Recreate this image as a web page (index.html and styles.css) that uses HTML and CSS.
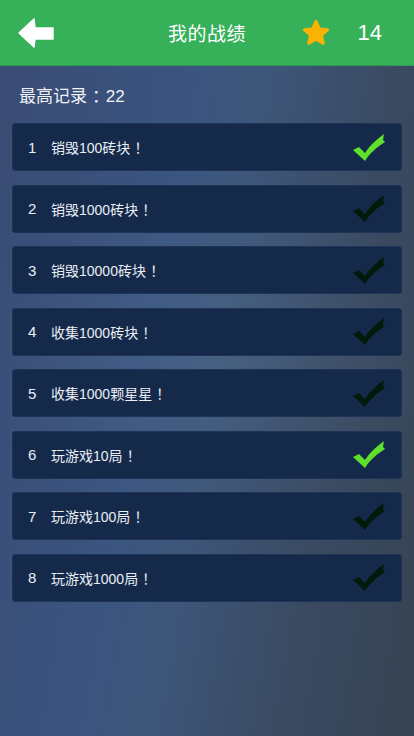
FILE: index.html
```html
<!DOCTYPE html>
<html lang="zh">
<head>
    <meta charset="UTF-8">
    <meta name="viewport" content="width=device-width, initial-scale=1.0">
    <title>我的战绩</title>
    <link rel="stylesheet" href="styles.css">
</head>
<body>
    <header class="top-bar">
        <div class="back">
            <svg width="36" height="30" viewBox="0 0 36 30">
                <path d="M1,15 L16,1 L17,10 L35,10 L35,21 L17,21 L16,29 Z" fill="#fff" stroke="#fff" stroke-width="1.5" stroke-linejoin="round"/>
            </svg>
        </div>
        <h1 class="title">我的战绩</h1>
        <div class="stars">
            <svg width="30" height="30" viewBox="0 0 24 24">
                <path d="M12,2.5 L14.8,8.6 L21.4,9.3 L16.5,13.8 L17.9,20.4 L12,17 L6.1,20.4 L7.5,13.8 L2.6,9.3 L9.2,8.6 Z" fill="#fbb202" stroke="#fbb202" stroke-width="2.2" stroke-linejoin="round"/>
            </svg>
            <span class="star-count">14</span>
        </div>
    </header>

    <p class="record">最高记录<span class="punct">：</span>22</p>

    <ul class="list">
        <li class="item"><span class="num">1</span><span class="label">销毁100砖块<span class="punct">！</span></span><svg class="check done" viewBox="0 0 33 27"><path d="M1,16 L7,13 L13,19 C18,11 25,5 32,0 L31,6 L33,8 C25,13 18,19 13,27 Z"/></svg></li>
        <li class="item"><span class="num">2</span><span class="label">销毁1000砖块<span class="punct">！</span></span><svg class="check" viewBox="0 0 33 27"><path d="M1,16 L7,13 L13,19 C18,11 25,5 32,0 L31,6 L33,8 C25,13 18,19 13,27 Z"/></svg></li>
        <li class="item"><span class="num">3</span><span class="label">销毁10000砖块<span class="punct">！</span></span><svg class="check" viewBox="0 0 33 27"><path d="M1,16 L7,13 L13,19 C18,11 25,5 32,0 L31,6 L33,8 C25,13 18,19 13,27 Z"/></svg></li>
        <li class="item"><span class="num">4</span><span class="label">收集1000砖块<span class="punct">！</span></span><svg class="check" viewBox="0 0 33 27"><path d="M1,16 L7,13 L13,19 C18,11 25,5 32,0 L31,6 L33,8 C25,13 18,19 13,27 Z"/></svg></li>
        <li class="item"><span class="num">5</span><span class="label">收集1000颗星星<span class="punct">！</span></span><svg class="check" viewBox="0 0 33 27"><path d="M1,16 L7,13 L13,19 C18,11 25,5 32,0 L31,6 L33,8 C25,13 18,19 13,27 Z"/></svg></li>
        <li class="item"><span class="num">6</span><span class="label">玩游戏10局<span class="punct">！</span></span><svg class="check done" viewBox="0 0 33 27"><path d="M1,16 L7,13 L13,19 C18,11 25,5 32,0 L31,6 L33,8 C25,13 18,19 13,27 Z"/></svg></li>
        <li class="item"><span class="num">7</span><span class="label">玩游戏100局<span class="punct">！</span></span><svg class="check" viewBox="0 0 33 27"><path d="M1,16 L7,13 L13,19 C18,11 25,5 32,0 L31,6 L33,8 C25,13 18,19 13,27 Z"/></svg></li>
        <li class="item"><span class="num">8</span><span class="label">玩游戏1000局<span class="punct">！</span></span><svg class="check" viewBox="0 0 33 27"><path d="M1,16 L7,13 L13,19 C18,11 25,5 32,0 L31,6 L33,8 C25,13 18,19 13,27 Z"/></svg></li>
    </ul>
</body>
</html>
```

FILE: styles.css
```css
/* Reset */
* {
    margin: 0;
    padding: 0;
    box-sizing: border-box;
}

body {
    font-family: 'Liberation Sans', 'Noto Sans CJK SC', sans-serif;
    min-height: 736px;
    color: #fff;
    background:
        radial-gradient(ellipse 55% 25% at 52% 48%, rgba(110, 140, 170, 0.2), rgba(110, 140, 170, 0) 100%),
        linear-gradient(100deg, #3a4b73 0%, #3a5580 38%, #3d5679 52%, #3a4a62 75%, #364352 100%);
}

.top-bar {
    height: 66px;
    background: #37b05a;
    border-bottom: 1px solid #2f9a4f;
    display: grid;
    grid-template-columns: 1fr auto 1fr;
    align-items: center;
    padding: 0 18px;
}

.back svg {
    display: block;
}

.title {
    font-size: 19px;
    font-weight: normal;
    letter-spacing: 0.5px;
}

.stars {
    display: flex;
    align-items: center;
    justify-content: flex-end;
    margin-right: 14px;
}

.stars svg {
    display: block;
}

.star-count {
    font-size: 22px;
    margin-left: 27px;
}

/* full-width punctuation, glyph centered in a 1em box */
.punct {
    display: inline-block;
    width: 1.1em;
    text-align: center;
    line-height: 1;
    font-feature-settings: "halt";
}

.record {
    font-size: 17px;
    line-height: 24px;
    height: 24px;
    margin: 19px 0 14px 19px;
    color: #eef1f5;
}

.list {
    list-style: none;
    padding: 0 12px;
    display: flex;
    flex-direction: column;
    gap: 13.5px;
}

.item {
    height: 48px;
    background: #152a4b;
    border: 1px solid #1e3456;
    border-radius: 3px;
    display: flex;
    align-items: center;
    padding: 0 16px 0 15px;
    color: #eaeef4;
}

.num {
    width: 23px;
    font-size: 15px;
}

.label {
    flex: 1;
    font-size: 14px;
}

.check {
    width: 33px;
    height: 27px;
    fill: #021a0a;
}

.check.done {
    fill: #5fe02c;
}
```
